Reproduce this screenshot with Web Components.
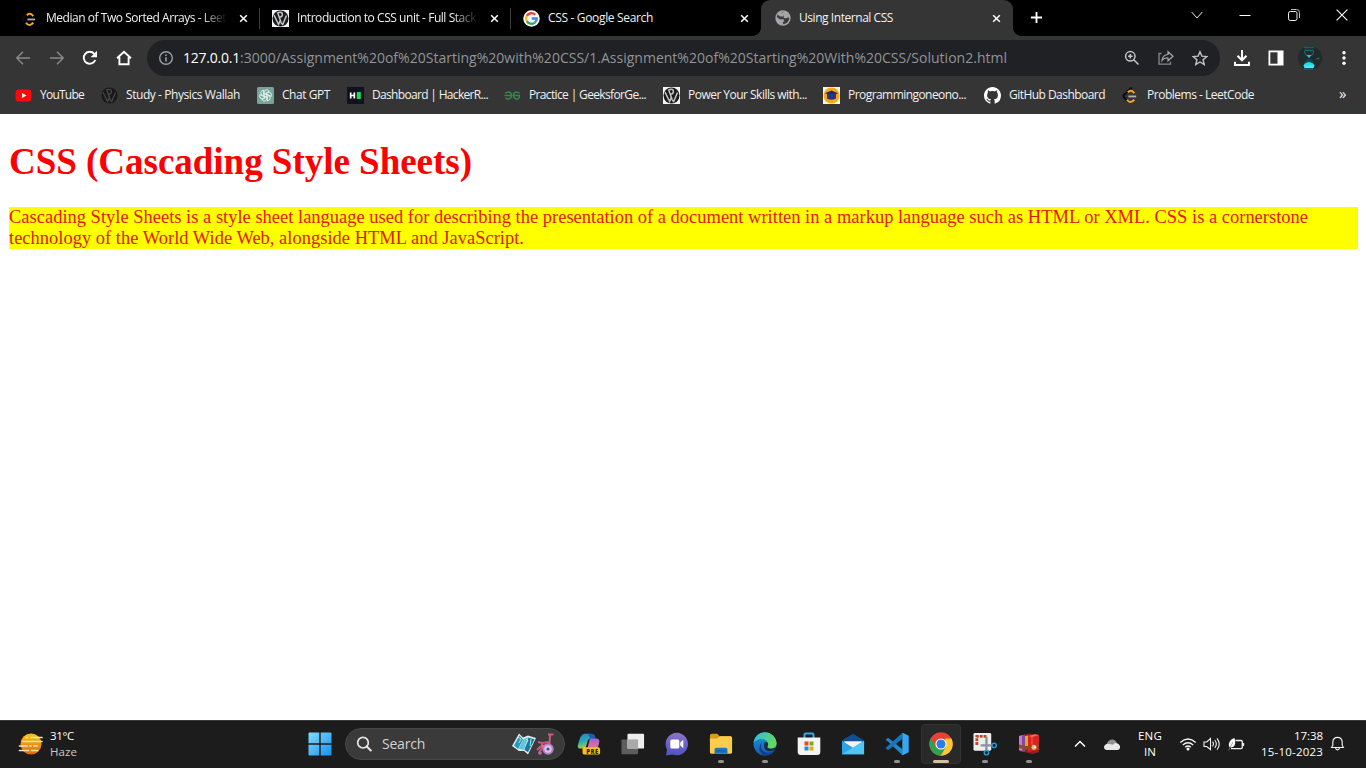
<!DOCTYPE html>
<html lang="en">
<head>
<meta charset="utf-8">
<title>Using Internal CSS</title>
<style>
html,body{margin:0;height:100%;overflow:hidden;background:#fff}
body{font-family:"Open Sans","Noto Sans",sans-serif;font-size:12px}
</style>
</head>
<body>
<desktop-screen></desktop-screen>
<script>
const ICONS = {
close:['0 0 10 10','<path d="M1.3 1.3 8.7 8.7M8.7 1.3 1.3 8.7" stroke="#fff" stroke-width="1.7"/>'],
plus:['0 0 14 14','<path d="M7 1v12M1 7h12" stroke="#fff" stroke-width="2"/>'],
leet:['0 0 18 18','<path d="M10.500.500 2.300 8.200Q.900 9.700 2.300 11.200L6.500 15.500" stroke="#0c0c0c" stroke-width="2.300" fill="none"/><path d="M6.300 5.700Q9.200 2 13 6.400" stroke="#f5a623" stroke-width="2.100" fill="none"/><path d="M5.300 13.500Q8.700 18.500 13 13.300" stroke="#f5a623" stroke-width="2.200" fill="none"/><path d="M6.800 10h8.200" stroke="#b3b1b0" stroke-width="1.900"/>'],
pw:['0 0 17 17','<rect width="17" height="17" fill="#f4f4f4"/><circle cx="8.500" cy="8.500" r="8" fill="#1b1b1b"/><path d="M5.500 2.200 9.200 12.800M5.600 2.800Q10.700 1.200 10.400 4.800 10 7.300 7.300 7.200M2 5.200 6.600 14.500 8.500 9.800M9 13l1.700 1.500 3.800-9" stroke="#bfc6c8" stroke-width="1.500" fill="none"/>'],
pwdark:['0 0 17 17','<circle cx="8.500" cy="8.500" r="8" fill="#191919"/><path d="M5.500 2.200 9.200 12.800M5.600 2.800Q10.700 1.200 10.400 4.800 10 7.300 7.300 7.200M2 5.200 6.600 14.500 8.500 9.800M9 13l1.700 1.500 3.800-9" stroke="#474747" stroke-width="1.300" fill="none"/>'],
google:['0 0 18 18','<circle cx="9" cy="9" r="8.7" fill="#fff"/><g fill="none" stroke-width="2.500"><path d="M13 5A5.700 5.700 0 0 0 4 6.300" stroke="#ea4335"/><path d="M4 6.200A5.700 5.700 0 0 0 4 11.800" stroke="#fbbc05"/><path d="M4 11.700A5.700 5.700 0 0 0 12.600 13.300" stroke="#34a853"/><path d="M9.200 9h5.400Q14.700 11.600 12.500 13.300" stroke="#4285f4"/></g>'],
globe:['0 0 16 16','<circle cx="8" cy="8" r="7.700" fill="#a2a6aa"/><path d="M9.300 1.800Q6 3 6.200 5.300L8.800 5.800 8.500 7.800 11 8.400 13 7.200 14.300 8.300A6.300 6.300 0 0 1 8.400 14.200L7.700 12.300 9.400 11.200 8.500 9.300 4.800 9.200 1.700 7A6.300 6.300 0 0 1 9.300 1.800z" fill="#37393b"/><path d="M2.500 4.500 5 6.500h3L8 4.800 6 4.300 8.500 1.500H6Q3.500 2 2.500 4.500z" fill="#a2a6aa"/>'],
chev:['0 0 12 12','<path d="M.7 3 6 9l5.300-6" fill="none" stroke="#eee" stroke-width="1"/>'],
min:['0 0 12 12','<path d="M.5 6.500h11" stroke="#fff"/>'],
restore:['0 0 12 12','<rect x=".5" y="2.500" width="8.500" height="9" rx="1.800" fill="none" stroke="#eee"/><path d="M3 .5h5.500a3 3 0 0 1 3 3v5.500" fill="none" stroke="#bbb"/>'],
x:['0 0 12 12','<path d="M.6.6 11.400 11.400M11.400.6.6 11.400" stroke="#fff" stroke-width="1.100"/>'],
back:['0 0 16 16','<path d="M15 8H2M8 1.800 1.800 8 8 14.200" fill="none" stroke="#898989" stroke-width="1.500"/>'],
fwd:['0 0 16 16','<path d="M1 8h13M8 1.800 14.200 8 8 14.200" fill="none" stroke="#898989" stroke-width="1.500"/>'],
reload:['0 0 16 16','<path d="M13.300 10A6 6 0 1 1 12.300 3.800L14 5.700" fill="none" stroke="#fff" stroke-width="1.900"/><path d="M15 .8v6.400H8.600z" fill="#fff"/>'],
home:['0 0 16 16','<path d="M1 8.300 8 1.700l7 6.600M3.400 7v7.200h9.200V7" fill="none" stroke="#fff" stroke-width="1.900"/>'],
info:['0 0 16 16','<circle cx="8" cy="8" r="6.300" fill="none" stroke="#9aa0a6" stroke-width="1.400"/><path d="M8 7.200v4.300M8 4.400v1.600" stroke="#9aa0a6" stroke-width="1.600"/>'],
zoom:['0 0 16 16','<circle cx="6.300" cy="6.300" r="4.700" fill="none" stroke="#c2c5c8" stroke-width="1.500"/><path d="m9.800 9.800 4.700 4.700M4 6.300h4.600M6.300 4v4.600" stroke="#c2c5c8" stroke-width="1.500"/>'],
share:['0 0 18 16','<path d="M4.500 3.500H2V14.200h11.500v-2.500" fill="none" stroke="#85888b" stroke-width="1.300"/><path d="M5 10.500Q5.500 5 11 4.500V1.700l5 4.600-5 4.500V8Q7 7.700 5 10.500z" fill="none" stroke="#a4a7aa" stroke-width="1.200"/>'],
star:['0 0 16 16','<path d="m8 1.700 1.900 4.500 4.900.4-3.700 3.200 1.100 4.700L8 12l-4.200 2.500 1.100-4.700L1.200 6.600l4.900-.4z" fill="none" stroke="#c2c5c8" stroke-width="1.400"/>'],
down:['0 0 18 18','<path d="M9 1v9.500M4.500 6.800 9 11.300l4.500-4.500M2 12.800V16h14v-3.200" fill="none" stroke="#fff" stroke-width="2"/>'],
panel:['0 0 16 16','<rect x="1.400" y="1.400" width="13.200" height="13.200" fill="none" stroke="#fff" stroke-width="1.800"/><path d="M9.500 1h5v14h-5z" fill="#fff"/>'],
avatar:['0 0 24 24','<circle cx="12" cy="12" r="12" fill="#232a2b"/><path d="M6 1.500h10M6.500 5q0 4 4.500 5.500 4.500-1.500 4.500-5.500" fill="none" stroke="#0c6468" stroke-width="1.300"/><path d="M6.500 4.300h9" stroke="#107f85"/><path d="M8.500 9h5L11 12z" fill="#21cad3"/><path d="M6 17.500q.5-3.500 5-5 4.500 1.500 5 5z" fill="#14484b"/><path d="M5.500 20q0-3 5.500-4 5.500 1 5.500 4z" fill="#21dce9"/><path d="M5.500 19.500h11l-1 2.500h-9z" fill="#36f0fb"/><path d="M6 23h9" stroke="#12838a"/><path d="M18.500 13q2-1 3 0" stroke="#188990" fill="none"/>'],
dots:['0 0 16 16','<circle cx="8" cy="2.700" r="1.700" fill="#fff"/><circle cx="8" cy="8" r="1.700" fill="#fff"/><circle cx="8" cy="13.300" r="1.700" fill="#fff"/>'],
yt:['0 0 17 17','<rect x=".5" y="2.500" width="16" height="12" rx="3" fill="#f50b0b"/><path d="m7 6 4.500 2.500L7 11z" fill="#fff"/>'],
gpt:['0 0 17 17','<rect width="17" height="17" rx="1.500" fill="#74a597"/><g fill="none" stroke="#e8f2ee" stroke-width=".9"><path id="a" d="M7.200 10.200V5.100a2.500 2.500 0 0 1 4.500-1.300M8.500 6.300l4-2.300"/><path d="M7.200 10.200V5.100a2.500 2.500 0 0 1 4.500-1.300M8.500 6.300l4-2.300" transform="rotate(60 8.500 8.500)"/><path d="M7.200 10.200V5.100a2.500 2.500 0 0 1 4.500-1.300M8.500 6.300l4-2.300" transform="rotate(120 8.500 8.500)"/><path d="M7.200 10.200V5.100a2.500 2.500 0 0 1 4.500-1.300M8.500 6.300l4-2.300" transform="rotate(180 8.500 8.500)"/><path d="M7.200 10.200V5.100a2.500 2.500 0 0 1 4.500-1.300M8.500 6.300l4-2.300" transform="rotate(240 8.500 8.500)"/><path d="M7.200 10.200V5.100a2.500 2.500 0 0 1 4.500-1.300M8.500 6.300l4-2.300" transform="rotate(300 8.500 8.500)"/></g>'],
hr:['0 0 17 17','<rect width="17" height="17" fill="#0e141e"/><path d="M3.700 5.500v6M7.300 5.500v6M3.700 8.500h3.600" stroke="#fff" stroke-width="1.700"/><path d="M9.800 5h4v7h-4z" fill="#1fd760"/>'],
gfg:['0 0 18 17','<path d="M1.500 6.300Q4.500 3.500 7 5.600 9 8.500 7 11.300 4 13.500 1.700 11M.5 8.500h8M16.500 6.300Q13.500 3.500 11 5.600 9 8.500 11 11.300 14 13.500 16 11L16.200 8.500H9.800" fill="none" stroke="#318848" stroke-width="1.600"/>'],
prog:['0 0 17 17','<rect width="17" height="17" fill="#f7f2e6"/><circle cx="8.500" cy="8.500" r="8" fill="#f8a719"/><path d="m2 6.200 6.500-2.700L15 6.200 8.500 9z" fill="#1c2c5c"/><path d="M4 6.500h9v5q-4.500 2.500-9 0z" fill="#27377a"/>'],
github:['0 0 16 16','<path fill="#fff" d="M8 0C3.580 0 0 3.580 0 8c0 3.540 2.290 6.530 5.470 7.590.4.070.55-.17.55-.38 0-.19-.01-.82-.01-1.490-2.010.37-2.530-.49-2.690-.94-.09-.23-.48-.94-.82-1.130-.28-.15-.68-.52-.01-.53.63-.01 1.080.58 1.230.82.72 1.210 1.870.87 2.330.66.070-.52.280-.87.510-1.070-1.780-.2-3.640-.89-3.640-3.950 0-.87.310-1.590.82-2.150-.08-.2-.36-1.020.08-2.120 0 0 .67-.21 2.200.82.64-.18 1.320-.27 2-.27s1.360.09 2 .27c1.530-1.040 2.200-.82 2.200-.82.44 1.100.16 1.920.08 2.120.51.56.82 1.270.82 2.150 0 3.070-1.870 3.750-3.650 3.950.29.25.54.73.54 1.480 0 1.070-.01 1.930-.01 2.200 0 .21.15.46.55.38A8.010 8.010 0 0 0 16 8c0-4.420-3.580-8-8-8z"/>'],
haze:['0 0 26 22','<defs><linearGradient id="a" x2="0" y2="1"><stop stop-color="#f9c514"/><stop offset="1" stop-color="#dd6817"/></linearGradient></defs><circle cx="13" cy="11" r="10.500" fill="url(#a)"/><g stroke="#fbe3b4" stroke-width="1.700" stroke-linecap="round"><path d="M13 4.500H24M8 4.500h1.500M5 8.500h14.500M16 8.500h8M1.500 13H9M12 13h1M16 13h3M1.500 17.500h9M13.500 17.500h6"/></g>'],
win:['0 0 24 24','<defs><linearGradient id="a" gradientUnits="userSpaceOnUse" x1="0" y1="0" x2="24" y2="24"><stop stop-color="#84dcfb"/><stop offset="1" stop-color="#158ff0"/></linearGradient></defs><path d="M.5 1.500Q.5.500 1.500.500H11.300V11.300H.500zM12.700.500h9.800q1 0 1 1v9.800H12.700zM.500 12.700h10.800v10.800H1.500q-1 0-1-1zM12.700 12.700h10.800v9.800q0 1-1 1h-9.800z" fill="url(#a)"/>'],
search:['0 0 16 16','<circle cx="7" cy="6.700" r="5.300" fill="none" stroke="#e6e6e6" stroke-width="1.700"/><path d="m10.800 10.500 4 4" stroke="#e6e6e6" stroke-width="2" stroke-linecap="round"/>'],
map:['0 0 44 24','<path d="M0 14 7 1.500 11 5.500 16 3.500 24 6 16 22.500 12 19 7 19z" fill="#dfeef3"/><path d="M2 13.500 7.500 3.500 11 7.500 6 17z" fill="#2898b9"/><path d="M6.500 17 11.500 7 16 5.300 12 17.700z" fill="#61c5da"/><path d="m12.500 18 4-12.500 6 1.800-6.500 13z" fill="#1c75a4"/><path d="m6 5 3 2-2 4M14 7l2 2-3 4M19 7l-1 7" stroke="#a7e7cb" fill="none"/><path d="M36 2.500h5.500M38 3l-.500 11H29M29 14l-4 4M26 10l4 1 7-1M30 11v5l-3 5" fill="none" stroke="#c75a7d" stroke-width="2"/><path d="m29 13 9-1v3h-8z" fill="#e86879"/><circle cx="36" cy="17" r="5.700" fill="#ad84bf"/><circle cx="36" cy="17" r="3.700" fill="#dfc3ee"/><circle cx="36" cy="17" r="1.500" fill="#554477"/><circle cx="28" cy="21" r="1.800" fill="#bb6ca3"/>'],
copilot:['0 0 26 24','<defs><linearGradient id="a" x2=".3" y2="1"><stop stop-color="#2482d8"/><stop offset=".55" stop-color="#24adb5"/><stop offset="1" stop-color="#b3cd38"/></linearGradient><linearGradient id="b" x2="0" y2="1"><stop stop-color="#a261de"/><stop offset="1" stop-color="#f07576"/></linearGradient></defs><path d="M1 13Q4 1 8 1h7q3 0 4 5h-5q-2 0-3 5l-2 6H4q-4 0-3-4z" fill="url(#a)"/><path d="M16 1q4 0 4 5h-5L12 2z" fill="#1e59b1"/><path d="M14 6h7q4 0 3 5l-2 7H11z" fill="url(#b)"/><rect x="6" y="15.500" width="19" height="8" rx="2" fill="#fcc21a"/>'],
task:['0 0 26 24','<rect x=".500" y="7" width="18" height="16" rx="1" fill="#5d5d5d"/><rect x="7" y="1" width="18" height="16" rx="1" fill="#eee"/><path d="M7 7h11.500v10H7z" fill="#a9a9a9"/>'],
chat:['0 0 24 24','<defs><linearGradient id="a" x2="0" y2="1"><stop stop-color="#8c72c8"/><stop offset="1" stop-color="#5053c4"/></linearGradient></defs><path d="M12 .700A11.300 11.300 0 1 1 7.500 22.500L1 23.500 2 17.500A11.300 11.300 0 0 1 12 .700z" fill="url(#a)"/><rect x="5.300" y="7.500" width="9" height="9" rx="1.500" fill="#fff"/><path d="m15.300 10.500 3-2.700v8.500l-3-2.800z" fill="#fff"/>'],
folder:['0 0 26 24','<path d="M1 3q0-2 2-2h6l2.500 2.500H23q2 0 2 2V10H1z" fill="#d79b17"/><path d="M1 6h8l3-2.500h11q2 0 2 2V21q0 1.500-1.500 1.500h-21Q1 22.500 1 21z" fill="#fccd4c"/><path d="M6 22.500V18q0-2 2-2h10q2 0 2 2v4.500z" fill="#1a79c3"/><path d="M8 19.500h10" stroke="#135d9c" stroke-width="1.300"/>'],
edge:['0 0 24 24','<defs><linearGradient id="a" x2="1" y2=".4"><stop stop-color="#31b8ed"/><stop offset="1" stop-color="#65d95a"/></linearGradient><linearGradient id="b" x2="0" y2="1"><stop stop-color="#199bd9"/><stop offset="1" stop-color="#135cb4"/></linearGradient></defs><circle cx="12" cy="12" r="11.500" fill="url(#b)"/><path d="M.5 10.500A11.600 11.600 0 0 1 23.600 11c0 5.500-5.600 6.500-8.600 4.900q-1.200-.9-.3-2.200Q16 10 12.500 8 6 5 .5 10.500z" fill="url(#a)"/><path d="M9 9.500Q6 18 13 20.500q5 1 8.800-2.200Q17 24 10.500 23.300 3 18 9 9.500z" fill="#123f87"/><path d="M11 11q2.500-2 4 .500.500 1.300-.400 2.600-.800 1.600 1.400 2.500 3 .8 6-.8l1.500 0-2.700 2.800Q12 21 11 14.500z" fill="#1c1c1c" opacity=".8"/>'],
store:['0 0 24 24','<path d="M7.500 6V2.500q0-1 1-1h7q1 0 1 1V6" fill="none" stroke="#38a7df" stroke-width="2"/><path d="M.700 5.500h22.600V20q0 3-3 3H3.700q-3 0-3-3z" fill="#f4f4f4"/><path d="M7.500 9.500h4v4h-4z" fill="#e34c26"/><path d="M12.500 9.500h4v4h-4z" fill="#77ad26"/><path d="M7.500 14.500h4v4h-4z" fill="#2490d0"/><path d="M12.500 14.500h4v4h-4z" fill="#e9aa18"/>'],
mail:['0 0 26 24','<path d="M1 8 13 1l12 7v6H1z" fill="#0f4e91"/><path d="M3.500 9h19v5L13 20 3.500 14z" fill="#f2f3f4"/><path d="M1 8.500 13 16 25 8.500V23H1z" fill="#2da2e8"/><path d="m1 23 24-14.500V23z" fill="#51c5f6"/>'],
vscode:['0 0 24 24','<path d="m17.500.700 6 3v16.600l-6 3L2.700 9.300.500 8 3 5.800 17.500 17.300z" fill="#2387cb"/><path d="M17.500.700 3 13.700.500 16 3 18.200 17.500 6.800z" fill="#1675bb"/><path d="m17.500.700 6 3v16.600l-6 3z" fill="#38a7ed"/>'],
chrome:['0 0 24 24','<circle cx="12" cy="12" r="11.700" fill="#e54335"/><path d="M12 12 6.700 15 1.900 6.200A11.700 11.700 0 0 0 11.700 23.700L17 15z" fill="#2ca44f"/><path d="M11.700 23.700 17.200 14.500 16 6.500h6.400A11.700 11.700 0 0 1 11.700 23.700z" fill="#fcc934"/><circle cx="12" cy="12" r="5.600" fill="#fff"/><circle cx="12" cy="12" r="4.500" fill="#2b7de9"/>'],
snip:['0 0 25 24','<rect x=".500" y=".500" width="18.500" height="18.500" rx="1.500" fill="#eee"/><path d="M4 13V4h11" fill="none" stroke="#bf4625" stroke-width="3" stroke-dasharray="3 1"/><path d="M14 4.500v14M8 13.500h12" stroke="#8b9298" stroke-width="2.400"/><circle cx="14" cy="21" r="2.300" fill="none" stroke="#239bd8" stroke-width="1.500"/><circle cx="22" cy="13.500" r="2.300" fill="none" stroke="#239bd8" stroke-width="1.500"/>'],
rar:['0 0 24 24','<path d="m2 4 10-2.500L22 3v17l-6 2L2 19z" fill="#911f1c"/><path d="m2 4 4-1v16.500L2 18z" fill="#cc79c7"/><path d="m5 3.500 3-1v17L5 19z" fill="#7c48ad"/><path d="m8 4 3-.5V14H8z" fill="#e6a823"/><path d="m11 4 11-1v15l-11 2z" fill="#d92322"/><path d="m11 4 7-1.800 4 .8-7 2z" fill="#f0705a"/><path d="M15 5v8" stroke="#ef4b41" stroke-width="1.500"/><path d="m2 12.500 9 2 11-2v3.500l-11 2-9-2z" fill="#944c18"/><circle cx="17" cy="15.300" r="2.500" fill="#ebb77a"/><circle cx="18" cy="15.300" r="1" fill="#fff"/>'],
up:['0 0 12 12','<path d="m1 8.500 5-5 5 5" fill="none" stroke="#fff" stroke-width="1.500"/>'],
cloud:['0 0 18 14','<path d="M4 9Q3.500 4 7.500 2.700 12 1.500 14 6l-5 5z" fill="#929292"/><path d="M3.800 13Q1 12.500 1 10 1.500 7 5 6.800l5 1Q12 5 14.500 6.500 17.500 8 17 11q-.7 2-2.500 2z" fill="#e9e9e9"/>'],
wifi:['0 0 18 14','<path d="M1.300 5.500Q9-1.500 16.700 5.500M3.800 8Q9 3.500 14.200 8M6.200 10.300q2.800-2.500 5.600 0" fill="none" stroke="#f4f4f4" stroke-width="1.400"/><circle cx="9" cy="12" r="1.500" fill="#fff"/>'],
sound:['0 0 18 14','<path d="M1 5h2.700L7.500 1.500v11L3.700 9.500H1z" fill="none" stroke="#f0f0f0" stroke-width="1.100"/><path d="M9.500 4.700q1.800 2.300 0 4.600M11.700 3q3.300 4 0 8M14 1.300q4.500 5.700 0 11.400" fill="none" stroke="#f0f0f0" stroke-width="1.100"/>'],
battery:['0 0 18 14','<path d="M8.500 3.500H14q1.300 0 1.300 1.300v5.500q0 1.300-1.300 1.300H4M16.500 6v3" fill="none" stroke="#f0f0f0" stroke-width="1.300"/><path d="M2 9.500Q1 3 7.500 1q2 6.500-1.500 9-2 1-4-.5z" fill="#fff"/><path d="M1.500 13.500 6 5" stroke="#8a8a8a" stroke-width=".800"/>'],
bell:['0 0 16 16','<path d="M1.700 12.300h12.600L13 9.800V6.300Q12.500 1.500 8 1.500T3 6.300v3.500zM6 12.800q.3 2 2 2t2-2" fill="none" stroke="#f2f2f2" stroke-width="1.200"/>']
};

class Base extends HTMLElement {
  connectedCallback() {
    if (this.shadowRoot) return;
    this.attachShadow({mode: 'open'}).innerHTML = this.view();
    this.ready && this.ready();
  }
  get(n, d = '') { return this.getAttribute(n) ?? d; }
}

/* <ui-icon name w h>: one drawing of the icon set */
class UiIcon extends Base {
  view() {
    const [box, art] = ICONS[this.get('name')];
    const w = this.get('w', 16), h = this.get('h', w);
    return `<style>:host{display:block;flex:none;width:${w}px;height:${h}px}svg{display:block}</style>
    <svg width="${w}" height="${h}" viewBox="${box}">${art}</svg>`;
  }
}

/* <ui-label w>: one line of text, tracked so that it is w pixels wide */
class UiLabel extends Base {
  view() {
    return `<style>:host{display:block;flex:none;white-space:pre}span{display:inline-block}</style><span><slot></slot></span>`;
  }
  ready() {
    const w = +this.get('w', 0);
    if (!w) return;
    const span = this.shadowRoot.querySelector('span');
    span.style.letterSpacing = (w - span.getBoundingClientRect().width) / this.textContent.length + 'px';
  }
}

class BrowserTab extends Base {
  view() {
    const active = this.hasAttribute('active'), clip = this.hasAttribute('clip');
    return `<style>
    :host{display:flex;align-items:center;box-sizing:border-box;flex:none;width:${this.get('width')}px;height:36px;padding:0 12px 0 ${this.get('pad', 12)}px;gap:8px;color:#f1f1f1;position:relative;
      ${active ? 'background:#353535;border-radius:9px 9px 0 0;' : ''}}
    .title{flex:1;min-width:0;padding-bottom:1px;${clip ? '-webkit-mask-image:linear-gradient(90deg,#000 86%,transparent);mask-image:linear-gradient(90deg,#000 86%,transparent);' : ''}}
    ui-icon.c{margin-left:4px}
    ${this.hasAttribute('sep') ? ':host::after{content:"";position:absolute;right:0;top:8px;width:1px;height:21px;background:#3d3d3d}' : ''}
    ${active ? `:host::before,:host::after{content:"";position:absolute;bottom:0;width:8px;height:8px}
      :host::before{left:-8px;background:radial-gradient(circle at 0 0,transparent 7.5px,#353535 8px)}
      :host::after{right:-8px;background:radial-gradient(circle at 100% 0,transparent 7.5px,#353535 8px)}` : ''}
    </style>
    <ui-icon name="${this.get('icon')}" w="${this.get('iw', 17)}"></ui-icon>
    <div class="title"><ui-label w="${this.get('tw')}"><slot></slot></ui-label></div>
    <ui-icon class="c" name="close" w="9"></ui-icon>`;
  }
  ready() {
    /* the title text is handed to the label itself, which measures it */
    this.shadowRoot.querySelector('ui-label').textContent = this.textContent;
  }
}

class TabStrip extends Base {
  view() {
    return `<style>:host{display:flex;height:36px;background:#000;padding-left:9px}
    .plus{padding:11px 0 0 17px}.ctl{display:flex;margin-left:auto}
    .ctl div{width:48.300px;display:flex;justify-content:center;padding-top:9px}</style>
    <browser-tab width="251" icon="leet" tw="180" sep clip>Median of Two Sorted Arrays - Leet</browser-tab>
    <browser-tab width="251" icon="pw" tw="179" sep clip>Introduction to CSS unit - Full Stack</browser-tab>
    <browser-tab width="250" icon="google" tw="105">CSS - Google Search</browser-tab>
    <browser-tab width="252" icon="globe" pad="14" iw="16" tw="94" active>Using Internal CSS</browser-tab>
    <div class="plus"><ui-icon name="plus" w="13"></ui-icon></div>
    <div class="ctl"><div><ui-icon name="chev" w="12"></ui-icon></div><div><ui-icon name="min" w="12"></ui-icon></div><div><ui-icon name="restore" w="12"></ui-icon></div><div><ui-icon name="x" w="12"></ui-icon></div></div>`;
  }
}

class AddressBar extends Base {
  view() {
    return `<style>:host{display:flex;align-items:center;height:44px;background:#353535}
    .nav{display:flex;width:147px;box-sizing:border-box;padding-left:15px;gap:17.700px}
    .pill{display:flex;align-items:center;box-sizing:border-box;width:1073px;height:36px;border-radius:18px;background:#202124;padding:0 12px 0 11px;font-size:14px;color:#929496}
    .url{display:flex;padding:0 0 2px 9px;flex:1}.host{color:#fff}
    .acts{display:flex;gap:17px;align-items:center}
    .tools{display:flex;align-items:center;padding-left:13px}
    .tools :nth-child(2){margin-left:17px}.tools :nth-child(3){margin-left:14px}.tools :nth-child(4){margin-left:14px}</style>
    <div class="nav"><ui-icon name="back"></ui-icon><ui-icon name="fwd"></ui-icon><ui-icon name="reload"></ui-icon><ui-icon name="home"></ui-icon></div>
    <div class="pill"><ui-icon name="info"></ui-icon><div class="url"><ui-label class="host" w="57">127.0.0.1</ui-label><ui-label w="767">:3000/Assignment%20of%20Starting%20with%20CSS/1.Assignment%20of%20Starting%20With%20CSS/Solution2.html</ui-label></div>
    <div class="acts"><ui-icon name="zoom"></ui-icon><ui-icon name="share" w="18" h="16"></ui-icon><ui-icon name="star"></ui-icon></div></div>
    <div class="tools"><ui-icon name="down" w="18"></ui-icon><ui-icon name="panel" w="16"></ui-icon><ui-icon name="avatar" w="24"></ui-icon><ui-icon name="dots" w="16"></ui-icon></div>`;
  }
}

class BookmarkBar extends Base {
  view() {
    const items = [['yt','YouTube',44,87],['pwdark','Study - Physics Wallah',114,155],['gpt','Chat GPT',48,90],['hr','Dashboard | HackerR...',116,157],['gfg','Practice | GeeksforGe...',117,159],['pw','Power Your Skills with...',119,160],['prog','Programmingoneono...',118,161],['github','GitHub Dashboard',96,138],['leet','Problems - LeetCode',107,217]];
    return `<style>:host{display:flex;align-items:center;height:34px;background:#353535;padding:0 0 4px 15px;box-sizing:border-box;color:#f1f1f1}
    .b{display:flex;align-items:center;gap:8px;flex:none}.b:nth-of-type(2){margin-left:-1px;margin-right:1px}.b ui-label{padding-bottom:2px}.more{font-size:15px;line-height:16px;padding-bottom:4px}</style>
    ${items.map(([i, t, w, s]) => `<div class="b" style="width:${s}px"><ui-icon name="${i}" w="17"></ui-icon><ui-label w="${w}">${t}</ui-label></div>`).join('')}
    <div class="more">»</div>`;
  }
}

class WebDocument extends Base {
  view() {
    return `<style>:host{display:block;flex:1;background:#fff;padding:0 8px 0 9px;font-family:"Liberation Serif",serif;color:#f00}
    h1{margin:0;padding-top:27px;font-size:37px;line-height:41px;height:66px}
    p{margin:0;background:#ff0;font-size:18.500px;line-height:21px;color:#e0190a}</style>
    <h1><ui-label w="463">CSS (Cascading Style Sheets)</ui-label></h1>
    <p><ui-label w="1299">Cascading Style Sheets is a style sheet language used for describing the presentation of a document written in a markup language such as HTML or XML. CSS is a cornerstone</ui-label><ui-label w="515">technology of the World Wide Web, alongside HTML and JavaScript.</ui-label></p>`;
  }
}

class TaskButton extends Base {
  view() {
    const st = this.get('state');
    return `<style>:host{display:flex;flex:none;align-items:center;justify-content:center;position:relative;width:44px;height:47px}
    .box{display:flex;align-items:center;justify-content:center;width:40px;height:40px;margin-bottom:1px;box-sizing:border-box;border-radius:4px;${st === 'on' ? 'background:#292929;border:1px solid #323232' : ''}}
    i{position:absolute;bottom:5px;height:3px;border-radius:2px;${st === 'on' ? 'width:16px;background:#d4bfa3' : 'width:6px;background:#929292'}}
    b{position:absolute;left:16px;top:26.500px;width:19px;text-align:center;font:800 6px/8px "Open Sans",sans-serif;letter-spacing:.5px;color:#2a1f00}</style>
    <div class="box"><ui-icon name="${this.get('icon')}" w="24"></ui-icon></div>${st ? '<i></i>' : ''}${this.get('badge') ? `<b>${this.get('badge')}</b>` : ''}`;
  }
}

class TaskBar extends Base {
  view() {
    return `<style>:host{display:flex;height:48px;box-sizing:border-box;border-top:1px solid #363936;background:#1c1c1c;color:#fff;align-items:center;font-size:11.500px;line-height:16px}
    .weather{display:flex;align-items:center;gap:6px;width:298px;box-sizing:border-box;padding:0 0 2px 18px}
    .weather .d{color:#c9c9c9}
    .search{display:flex;align-items:center;box-sizing:border-box;width:220px;height:32px;margin:0 2px 1px 3px;padding:0 8px 0 10px;border:1px solid #484848;border-radius:16px;background:#3a3a3a;font-size:14px;color:#d2d2d2}
    .search ui-label{padding-left:10px;flex:1}
    .tray{display:flex;align-items:center;padding-bottom:2px}.lang,.clock{display:flex;flex-direction:column}
    .lang{align-items:center;width:28px;margin-left:15px}.clock{align-items:flex-end;width:66px;margin-left:12px}</style>
    <div class="weather"><ui-icon name="haze" w="26" h="22"></ui-icon><div><ui-label w="24">31°C</ui-label><ui-label class="d" w="27">Haze</ui-label></div></div>
    <task-button icon="win"></task-button>
    <div class="search"><ui-icon name="search"></ui-icon><ui-label w="43">Search</ui-label><ui-icon name="map" w="44" h="24"></ui-icon></div>
    <task-button icon="copilot" badge="PRE"></task-button><task-button icon="task"></task-button><task-button icon="chat"></task-button><task-button icon="folder" state="run"></task-button><task-button icon="edge" state="run"></task-button><task-button icon="store"></task-button><task-button icon="mail"></task-button><task-button icon="vscode" state="run"></task-button><task-button icon="chrome" state="on"></task-button><task-button icon="snip" state="run"></task-button><task-button icon="rar" state="run"></task-button>
    <div class="tray"><ui-icon name="up" w="12" style="margin-left:23px"></ui-icon><ui-icon name="cloud" w="18" h="14" style="margin-left:17px"></ui-icon>
    <div class="lang"><ui-label w="24">ENG</ui-label><ui-label w="12">IN</ui-label></div>
    <ui-icon name="wifi" w="18" h="14" style="margin-left:15px"></ui-icon><ui-icon name="sound" w="18" h="14" style="margin-left:6px"></ui-icon><ui-icon name="battery" w="18" h="14" style="margin-left:6px"></ui-icon>
    <div class="clock"><ui-label w="29">17:38</ui-label><ui-label w="62">15-10-2023</ui-label></div><ui-icon name="bell" w="15" style="margin-left:7px"></ui-icon></div>`;
  }
}

class DesktopScreen extends Base {
  view() {
    return `<style>:host{display:flex;flex-direction:column;width:1366px;height:768px;overflow:hidden}</style>
    <tab-strip></tab-strip><address-bar></address-bar><bookmark-bar></bookmark-bar><web-document></web-document><task-bar></task-bar>`;
  }
}

for (const [n, c] of [['desktop-screen', DesktopScreen], ['tab-strip', TabStrip], ['address-bar', AddressBar], ['bookmark-bar', BookmarkBar], ['web-document', WebDocument], ['task-bar', TaskBar], ['browser-tab', BrowserTab], ['task-button', TaskButton], ['ui-icon', UiIcon], ['ui-label', UiLabel]])
  customElements.define(n, c);
</script>
</body>
</html>
